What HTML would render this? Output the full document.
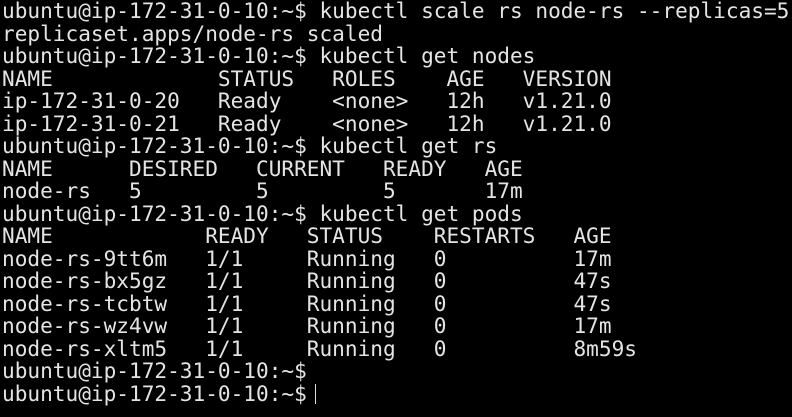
<!DOCTYPE html><html><head><style>
html,body{margin:0;background:#000;width:792px;height:417px;overflow:hidden}
pre{margin:0;position:absolute;left:2px;top:0;font-family:"DejaVu Sans Mono","Liberation Mono",monospace;font-size:21.1px;line-height:22.5px;color:#e4e4e4;letter-spacing:0}
.c{display:inline-block;width:1px;height:20px;background:#ddd;vertical-align:-3px;margin-left:8px}
</style></head><body><pre>ubuntu@ip-172-31-0-10:~$ kubectl scale rs node-rs --replicas=5
replicaset.apps/node-rs scaled
ubuntu@ip-172-31-0-10:~$ kubectl get nodes
NAME             STATUS   ROLES    AGE   VERSION
ip-172-31-0-20   Ready    &lt;none&gt;   12h   v1.21.0
ip-172-31-0-21   Ready    &lt;none&gt;   12h   v1.21.0
ubuntu@ip-172-31-0-10:~$ kubectl get rs
NAME      DESIRED   CURRENT   READY   AGE
node-rs   5         5         5       17m
ubuntu@ip-172-31-0-10:~$ kubectl get pods
NAME            READY   STATUS    RESTARTS   AGE
node-rs-9tt6m   1/1     Running   0          17m
node-rs-bx5gz   1/1     Running   0          47s
node-rs-tcbtw   1/1     Running   0          47s
node-rs-wz4vw   1/1     Running   0          17m
node-rs-xltm5   1/1     Running   0          8m59s
ubuntu@ip-172-31-0-10:~$
ubuntu@ip-172-31-0-10:~$<span class="c"></span></pre></body></html>
